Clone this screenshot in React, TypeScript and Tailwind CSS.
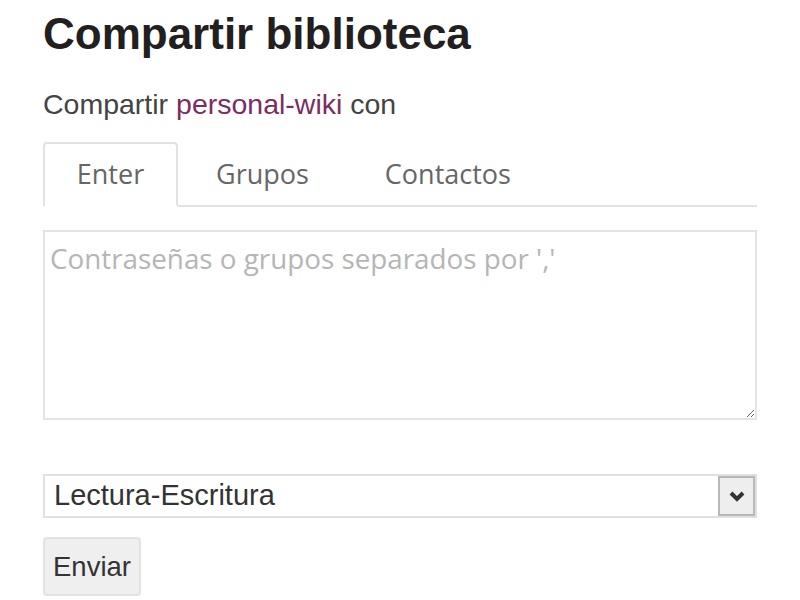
import { useState } from 'react';

const TABS = ['Enter', 'Grupos', 'Contactos'];

export default function App() {
  const [active, setActive] = useState(0);

  return (
    <div className="w-[800px] h-[600px] bg-white px-[43px] pt-[6px] font-['Liberation_Sans',Arial,sans-serif] overflow-hidden">
      {/* Header */}
      <h1 className="text-[44px] leading-[56px] font-bold text-[#231f20]">Compartir biblioteca</h1>
      <p className="mt-[25px] text-[28.5px] leading-[34px] text-[#444]">
        Compartir <a className="text-[#7d2c63]">personal-wiki</a> con
      </p>

      {/* Tabs */}
      <div className="mt-[21px] flex border-b-2 border-[#e2e2e2] w-[714px] font-['Open_Sans',sans-serif] text-[27px] text-[#666]">
        {TABS.map((t, i) => (
          <button
            key={t}
            onClick={() => setActive(i)}
            className={`h-[65px] -mb-[2px] rounded-t-[4px] border-2 ${
              active === i ? 'border-[#e2e2e2] border-b-white bg-white' : 'border-transparent'
            } ${i === 0 ? 'w-[135px]' : 'px-[36px]'}`}
          >
            {t}
          </button>
        ))}
      </div>

      {/* Input */}
      <textarea
        placeholder="Contraseñas o grupos separados por ','"
        className="mt-[23px] block w-[714px] h-[190px] border-2 border-[#e4e4e4] px-[5px] py-[6px] text-[27.8px] font-['Open_Sans',sans-serif] placeholder:text-[#b5b5b5] outline-none resize"
      />

      {/* Permission */}
      <div className="mt-[54px] flex w-[714px] h-[44px] border-2 border-[#e0e0e0]">
        <div className="flex-1 px-[9px] flex items-center text-[29px] text-[#333]">Lectura-Escritura</div>
        <div className="w-[37px] flex items-center justify-center bg-[#eeeeee] border-2 border-[#b8b8b8]">
          <svg width="18" height="12" viewBox="0 0 18 12">
            <path d="M3 3 L9 9 L15 3" fill="none" stroke="#333" strokeWidth="4" />
          </svg>
        </div>
      </div>

      <button className="mt-[19px] h-[59px] px-[8px] bg-[#efefef] border-2 border-[#e2e2e2] rounded-[4px] text-[27.5px] text-[#333]">
        Enviar
      </button>
    </div>
  );
}
